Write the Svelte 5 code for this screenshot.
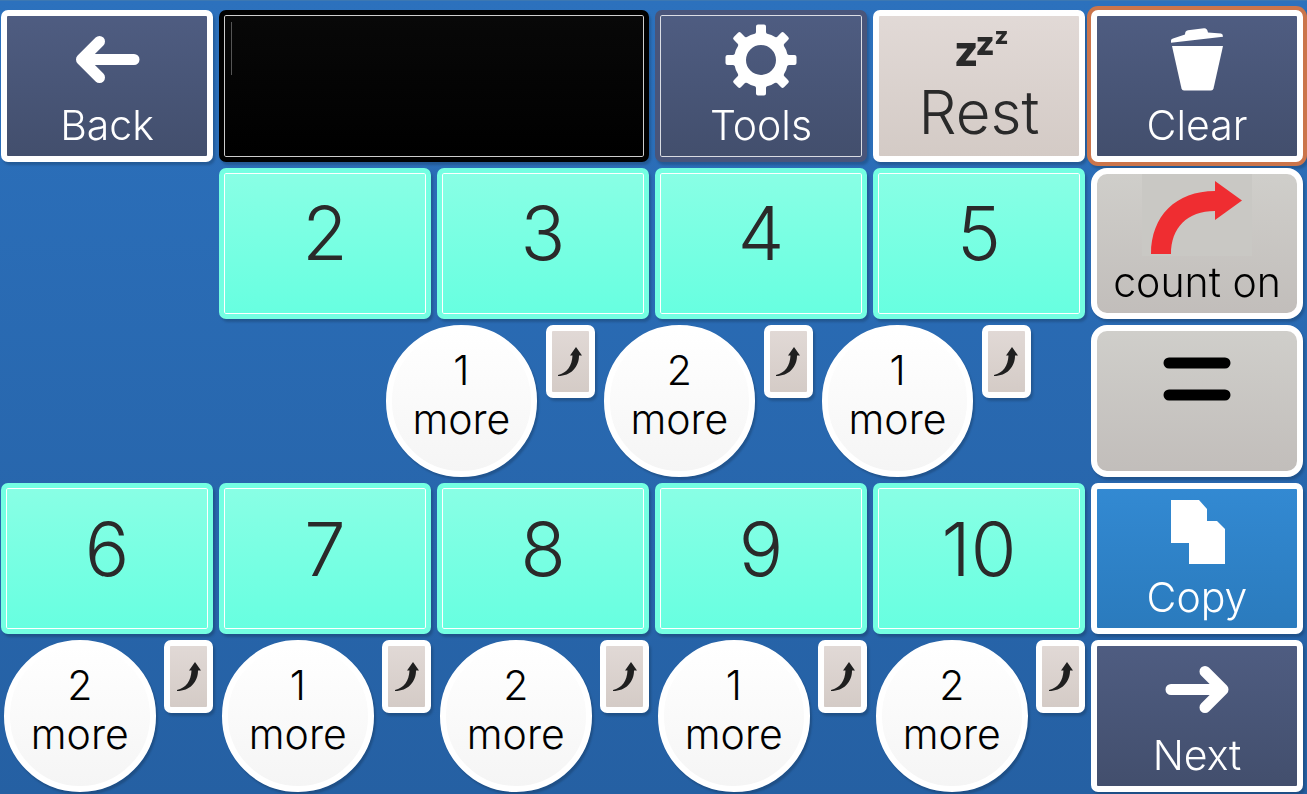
<script>
  // Text collected in the message bar
  let message = $state('');

  // Number tiles, with the steps that join them underneath
  const firstNumbers = [2, 3, 4, 5];
  const firstSteps = [1, 2, 1];
  const secondNumbers = [6, 7, 8, 9, 10];
  const secondSteps = [2, 1, 2, 1, 2];

  // Teeth of the tools gear
  const teeth = [0, 45, 90, 135, 180, 225, 270, 315];

  function add(text) {
    message = message ? message + ' ' + text : String(text);
  }

  function clear() {
    message = '';
  }

  function copy() {
    navigator.clipboard?.writeText(message);
  }
</script>

{#snippet steps(list)}
  {#each list as step}
    <div class="step">
      <button class="circle" onclick={() => add(step + ' more')}>
        <span>{step}</span>
        <span>more</span>
      </button>
      <button class="cell white rest jump" aria-label="Jump up">
        <svg width="24" height="29" viewBox="0 0 24 29">
          <path d="M0 28 C9 26 14 19 14.500 8.500 L12 8.500 L18 0 L24 8.500 L21 8.500 C21 20 13 29 0 29 Z" fill="#1f1f1f" />
        </svg>
      </button>
    </div>
  {/each}
{/snippet}

<main>
  <button class="cell white navy">
    <svg class="icon" viewBox="0 0 72 72">
      <path class="arrow" d="M28.500 17.500 L10.500 35.500 L28.500 53.500 M10.500 35.500 H63" />
    </svg>
    <span class="label">Back</span>
  </button>

  <div class="cell lined message">
    <textarea aria-label="Message" bind:value={message}></textarea>
  </div>

  <button class="cell lined navy">
    <svg class="icon" viewBox="0 0 72 72">
      <circle cx="36" cy="36" r="21" fill="none" stroke="#fff" stroke-width="12" />
      {#each teeth as angle}
        <path
          d="M24 13 Q31 11 31 8 L31 2.500 Q31 0.500 33 0.500 H39 Q41 0.500 41 2.500 L41 8 Q41 11 48 13 L44 16 H28 Z"
          fill="#fff"
          transform="rotate({angle} 36 36)"
        />
      {/each}
    </svg>
    <span class="label">Tools</span>
  </button>

  <button class="cell white rest">
    <svg class="zzz" width="50" height="42" viewBox="0 0 50 42" aria-hidden="true">
      <text x="0" y="38"><tspan font-size="42">z</tspan><tspan font-size="33" dx="-3" dy="-11">z</tspan><tspan font-size="24" dy="-11">z</tspan></text>
    </svg>
    <span class="label big">Rest</span>
  </button>

  <button class="cell white navy focused" onclick={clear}>
    <svg class="icon" viewBox="0 0 72 72" fill="#fff">
      <path d="M10 18.700 V16.500 Q10 15 12 14.500 L24 10.500 Q24 6.500 27 6.200 L43 4.300 Q46 4 47 8.500 L60 9.500 Q62 10 62 12.800 Z" />
      <path d="M11 22 H62 L52.500 64.500 Q52 66.500 50 66.500 H23 Q21 66.500 20.500 64.500 Z" />
    </svg>
    <span class="label">Clear</span>
  </button>

  {#each firstNumbers as n, i}
    <button class="cell lined mint" class:indent={i === 0} onclick={() => add(n)}>{n}</button>
  {/each}

  <button class="cell white grey" onclick={() => add('count on')}>
    <svg class="picture" viewBox="0 0 110 82">
      <rect width="110" height="82" fill="#c9c8c4" />
      <path d="M9 80 C9 42 34 17 73 17 V7 L100 26.500 L73 46 V37 C45 37 29 54 29 80 Z" fill="#ef2d31" />
    </svg>
    <span class="label dark">count on</span>
  </button>

  <div class="steps offset">{@render steps(firstSteps)}</div>

  <button class="cell white grey" aria-label="equals" onclick={() => add('=')}>
    <svg class="icon" viewBox="0 0 72 72">
      <path d="M8 24 H64 M8 56 H64" stroke="#000" stroke-width="11" stroke-linecap="round" />
    </svg>
  </button>

  {#each secondNumbers as n}
    <button class="cell lined mint" onclick={() => add(n)}>{n}</button>
  {/each}

  <button class="cell white blue" onclick={copy}>
    <svg class="icon" viewBox="0 0 72 72">
      <path d="M10 3 H38 L46 12 V24 H56 L64 32 V67 H28 V46 H10 Z" fill="#fff" />
    </svg>
    <span class="label">Copy</span>
  </button>

  <div class="steps">{@render steps(secondSteps)}</div>

  <button class="cell white navy">
    <svg class="icon" viewBox="0 0 72 72">
      <path class="arrow" d="M44 17.500 L62 35.500 L44 53.500 M62 35.500 H10" />
    </svg>
    <span class="label">Next</span>
  </button>
</main>

<style>
  :global(body) {
    margin: 0;
  }

  main {
    box-sizing: border-box;
    min-height: 100vh;
    display: grid;
    grid-template-columns: repeat(6, 1fr);
    grid-template-rows: repeat(5, minmax(150px, 1fr));
    gap: 6px;
    padding: 9px 4px 2px 1px;
    border-top: 1px solid #3d78b2;
    background: linear-gradient(#2c71bd, #2560a3);
    font-family: Inter, "Open Sans", sans-serif;
    font-weight: 300;
  }

  button {
    margin: 0;
    padding: 0;
    font: inherit;
    cursor: pointer;
  }

  .cell {
    box-sizing: border-box;
    min-width: 0;
    display: flex;
    flex-direction: column;
    align-items: center;
    border-radius: 7px;
    background-origin: border-box;
    filter: drop-shadow(2px 3px 1px rgba(0, 0, 0, 0.18));
  }

  .white {
    border: 6px solid #fff;
  }

  .lined {
    border: 5px solid;
    box-shadow: inset 0 0 0 1px rgba(255, 255, 255, 0.8);
  }

  .navy {
    background-image: linear-gradient(#4f5d82, #424e6c);
    border-color: #49557a;
  }

  .white.navy {
    border-color: #fff;
  }

  .rest {
    background-image: linear-gradient(#e2dad7, #d3cac5);
  }

  .grey {
    border-radius: 16px;
    background-image: linear-gradient(#d0cfcb, #c1bdba);
  }

  .blue {
    background-image: linear-gradient(#338ad3, #2a7abc);
  }

  .mint {
    justify-content: center;
    padding-bottom: 20px;
    border-color: #74ffe2;
    box-shadow: inset 0 0 0 1px #fff;
    background-image: linear-gradient(#8affe5, #66ffe0);
    color: #2a2a2a;
    font-size: 74px;
    font-weight: 350;
    line-height: 80px;
  }

  .focused {
    box-shadow: 0 0 0 4px #cb754b;
  }

  .indent {
    grid-column: 2;
  }

  .message {
    grid-column: span 2;
    align-items: stretch;
    border-color: #000;
    background: linear-gradient(#080808, #000);
    position: relative;
  }

  /* resting caret */
  .message::before {
    content: '';
    position: absolute;
    top: 7px;
    left: 7px;
    width: 1px;
    height: 53px;
    background: #555;
  }

  textarea {
    flex: 1;
    min-height: 0;
    padding: 6px 8px;
    border: none;
    outline: none;
    resize: none;
    background: transparent;
    color: #fff;
    font: inherit;
    font-size: 41px;
  }

  .icon {
    width: 72px;
    height: 72px;
    margin-top: 8px;
  }

  .lined .icon {
    margin-top: 9px;
  }

  .arrow {
    fill: none;
    stroke: #fff;
    stroke-width: 11;
    stroke-linecap: round;
    stroke-linejoin: round;
  }

  .picture {
    width: 110px;
    height: 82px;
  }

  .zzz {
    margin-top: 12px;
    overflow: visible;
    font-weight: 800;
    fill: #2a2a2a;
  }

  .label {
    margin-top: auto;
    margin-bottom: 6px;
    color: #fff;
    font-size: 41px;
    line-height: 50px;
  }

  .lined .label {
    margin-bottom: 7px;
  }

  .label.dark {
    color: #000;
  }

  .label.big {
    margin-bottom: 14px;
    color: #2a2a2a;
    font-size: 60px;
    line-height: 60px;
  }

  .steps {
    grid-column: 1 / 6;
    display: flex;
    gap: 6px;
  }

  .offset {
    padding: 0 5% 0 35.2%;
  }

  .step {
    flex: 1;
    display: flex;
    justify-content: space-between;
    align-items: flex-start;
    padding-left: 3px;
  }

  .circle {
    box-sizing: border-box;
    height: 100%;
    aspect-ratio: 1;
    display: flex;
    flex-direction: column;
    align-items: center;
    justify-content: center;
    padding-bottom: 12px;
    border: 6px solid #fff;
    border-radius: 50%;
    background: linear-gradient(#fff, #f5f5f5);
    box-shadow: 2px 3px 2px rgba(0, 0, 0, 0.18);
    color: #000;
    font-size: 41px;
    line-height: 49px;
  }

  .jump {
    width: 49px;
    height: 48%;
    justify-content: center;
  }
</style>
